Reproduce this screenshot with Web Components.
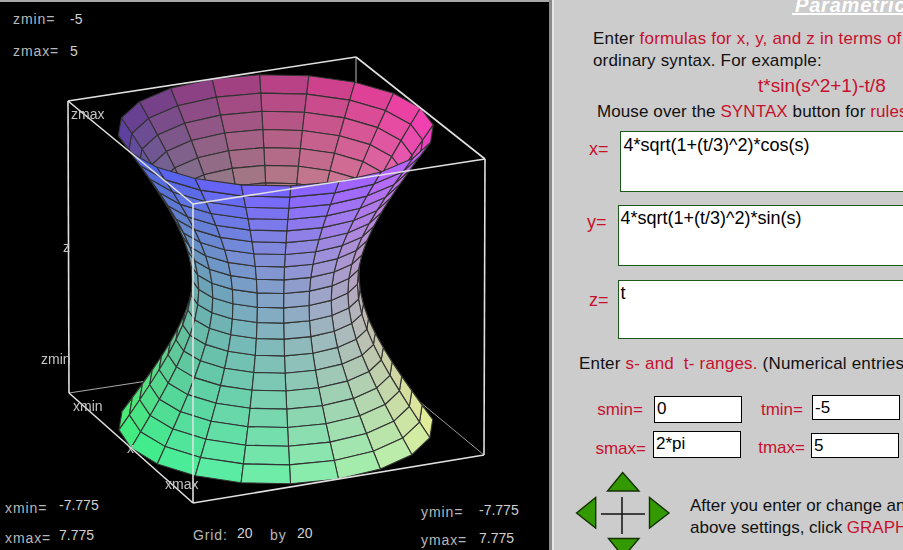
<!DOCTYPE html>
<html>
<head>
<meta charset="utf-8">
<title>Parametric Surfaces</title>
<style>
    html, body { margin: 0; height: 100%; overflow: hidden; background: #ccc; }
    body { display: flex; font-family: "Liberation Sans", Arial, sans-serif; }
</style>
</head>
<body>
<graph-view></graph-view>
<param-panel>
    <formula-box slot="x" label="x=" pad="36" top="7" style="height:61px;--text-top:3px;--text-left:3px">4*sqrt(1+(t/3)^2)*cos(s)</formula-box>
    <formula-box slot="y" label="y=" pad="34" top="6" style="height:61px">4*sqrt(1+(t/3)^2)*sin(s)</formula-box>
    <formula-box slot="z" label="z=" pad="36" top="9" gap="9" style="height:59px">t</formula-box>
</param-panel>
<script>
// 8 corners of the plot box as they land on screen, keyed x y z, 0 = min, 1 = max
const BOX = {
    '000': [69, 393], '100': [193, 503], '010': [356, 349], '110': [484, 455],
    '001': [68, 101], '101': [193, 204], '011': [356, 57], '111': [485, 159]
};

function project(x, y, z) {
    const fx = (x + 7.775) / 15.55, fy = (y + 7.775) / 15.55, fz = (z + 5) / 10;
    const out = [0, 0];
    for (let i = 0; i < 8; i++) {
        const a = i & 1, b = (i >> 1) & 1, c = (i >> 2) & 1;
        const w = (a ? fx : 1 - fx) * (b ? fy : 1 - fy) * (c ? fz : 1 - fz);
        const p = BOX['' + a + b + c];
        out[0] += w * p[0];
        out[1] += w * p[1];
    }
    return out;
}

function depth(x, y, z) {
    return 0.856 * x / 15.55 - 0.372 * y / 15.55 + 0.358 * z / 10;
}

function surface(s, t) {
    // the small bulge makes up for the waist the old applet drew a bit wide
    const r = 4 * Math.sqrt(1 + (t / 3) * (t / 3)) * (1 + 0.03 * (1 - (t / 5) * (t / 5)));
    return [r * Math.cos(s), r * Math.sin(s), t];
}

function faceColor(x, y, z, outer) {
    const nx = x / 7.775, ny = y / 7.775, nz = z / 5;
    let c;
    if (outer) {
        c = [150 + 80 * ny - 8 * nz * ny, 168 - 72 * nz, 177 + 40 * nx + 45 * nz];
    } else {
        c = [165 + 15 * nx + 75 * ny, 165 - 105 * nz, 155 + 45 * nx - 5 * ny + 20 * nz];
    }
    return 'rgb(' + c.map(v => Math.round(Math.max(0, Math.min(255, v)))).join(',') + ')';
}

class GraphView extends HTMLElement {
    constructor() {
        super();
        this.attachShadow({ mode: 'open' });
    }

    connectedCallback() {
        const line = (a, b, color, w) => {
            const p = project(a[0], a[1], a[2]), q = project(b[0], b[1], b[2]);
            return `<line x1="${p[0]}" y1="${p[1]}" x2="${q[0]}" y2="${q[1]}" stroke="${color}" stroke-width="${w}"/>`;
        };
        const M = 7.775, Z = 5;
        const A = [-M, -M, Z], B = [-M, M, Z], C = [M, M, Z], D = [M, -M, Z];
        const A2 = [-M, -M, -Z], B2 = [-M, M, -Z], C2 = [M, M, -Z], D2 = [M, -M, -Z];

        const back = line(B, B2, '#bbb', 1) + line(A2, B2, '#aaa', 1) + line(B2, C2, '#999', 1);
        const front = [[A, B], [B, C], [C, D], [D, A], [A, A2], [C, C2], [D, D2], [A2, D2], [D2, C2]]
            .map(e => line(e[0], e[1], '#e0e0e0', 1.6)).join('');

        const N = 20;
        const faces = [];
        for (let i = 0; i < N; i++) {
            for (let j = 0; j < N; j++) {
                const s0 = 2 * Math.PI * i / N, s1 = 2 * Math.PI * (i + 1) / N;
                const t0 = -5 + 10 * j / N, t1 = -5 + 10 * (j + 1) / N;
                const pts = [surface(s0, t0), surface(s1, t0), surface(s1, t1), surface(s0, t1)];
                const scr = pts.map(p => project(p[0], p[1], p[2]));
                let area = 0;
                for (let k = 0; k < 4; k++) {
                    const a = scr[k], b = scr[(k + 1) % 4];
                    area += a[0] * b[1] - b[0] * a[1];
                }
                const mid = surface((s0 + s1) / 2, (t0 + t1) / 2);
                faces.push({
                    d: depth(mid[0], mid[1], mid[2]),
                    pts: scr.map(p => p[0].toFixed(1) + ',' + p[1].toFixed(1)).join(' '),
                    fill: faceColor(mid[0], mid[1], mid[2], area < 0)
                });
            }
        }
        faces.sort((a, b) => a.d - b.d);
        const mesh = faces.map(f =>
            `<polygon points="${f.pts}" fill="${f.fill}" stroke="#333" stroke-width="1.1" stroke-linejoin="round"/>`).join('');

        this.shadowRoot.innerHTML = `
            <style>
                :host {
                    display: block;
                    position: relative;
                    flex: none;
                    width: 549px;
                    height: 550px;
                    box-sizing: border-box;
                    background: #000;
                    border-top: 2px solid #a8a8a8;
                    color: #d0d0d0;
                    font-size: 14px;
                    overflow: hidden;
                }
                svg {
                    position: absolute;
                    left: 0;
                    top: -2px;
                    width: 549px;
                    height: 550px;
                    filter: blur(0.3px);
                }
                svg text {
                    fill: #c4c4c4;
                    font-size: 14px;
                }
                .hud {
                    position: relative;
                    height: 548px;
                    display: flex;
                    flex-direction: column;
                    justify-content: space-between;
                }
                .top {
                    display: grid;
                    grid-template-columns: 57px auto;
                    row-gap: 16px;
                    padding: 9px 0 0 13px;
                    line-height: 16px;
                }
                .bottom {
                    display: grid;
                    grid-template-columns: 188px 228px auto;
                    align-items: end;
                    padding-left: 5px;
                    line-height: 16px;
                }
                .range {
                    display: grid;
                    grid-template-columns: 54px auto;
                    align-items: start;
                    row-gap: 11px;
                    margin-bottom: 4px;
                }
                .range .lab { padding-top: 3px; }
                .range.y {
                    grid-template-columns: 58px auto;
                    row-gap: 10px;
                    margin-bottom: 2px;
                }
                .range.y .lab { padding-top: 2px; }
                .grid {
                    display: flex;
                    align-items: flex-start;
                    margin-bottom: 7px;
                }
                .grid .lab { padding-top: 2px; }
                .lab { color: #b8b8b8; letter-spacing: 0.9px; }
            </style>
            <svg viewBox="0 0 549 550" xmlns="http://www.w3.org/2000/svg">
                ${back}
                ${mesh}
                ${front}
                <text x="71" y="119">zmax</text>
                <text x="63" y="252">z</text>
                <text x="41" y="364">zmin</text>
                <text x="73" y="411">xmin</text>
                <text x="127" y="453">x</text>
                <text x="165" y="489">xmax</text>
            </svg>
            <div class="hud">
                <div class="top">
                    <span class="lab">zmin=</span><span>-5</span>
                    <span class="lab">zmax=</span><span>5</span>
                </div>
                <div class="bottom">
                    <div class="range">
                        <span class="lab">xmin=</span><span>-7.775</span>
                        <span class="lab">xmax=</span><span>7.775</span>
                    </div>
                    <div class="grid">
                        <span class="lab" style="width:44px">Grid:</span><span style="width:33px">20</span>
                        <span class="lab" style="width:27px">by</span><span>20</span>
                    </div>
                    <div class="range y">
                        <span class="lab">ymin=</span><span>-7.775</span>
                        <span class="lab">ymax=</span><span>7.775</span>
                    </div>
                </div>
            </div>
        `;
    }
}

class FormulaBox extends HTMLElement {
    constructor() {
        super();
        this.attachShadow({ mode: 'open' });
    }

    connectedCallback() {
        const pad = this.getAttribute('pad') || 34;
        const top = this.getAttribute('top') || 6;
        const gap = this.getAttribute('gap') || 11;
        this.shadowRoot.innerHTML = `
            <style>
                :host {
                    display: flex;
                    align-items: stretch;
                }
                .label {
                    flex: none;
                    box-sizing: border-box;
                    padding: ${top}px ${gap}px 0 ${pad}px;
                    color: #c8102e;
                    font-size: 18px;
                    line-height: 22px;
                }
                .box {
                    flex: none;
                    width: 400px;
                    box-sizing: border-box;
                    border: 1px solid #1c5a1c;
                    background: #fff;
                    padding: var(--text-top, 2px) 2px 2px var(--text-left, 2px);
                    color: #000;
                    font-size: 18px;
                    line-height: 20px;
                }
            </style>
            <span class="label">${this.getAttribute('label')}</span>
            <div class="box"><slot></slot></div>
        `;
    }
}

class RangeField extends HTMLElement {
    constructor() {
        super();
        this.attachShadow({ mode: 'open' });
    }

    connectedCallback() {
        const gap = this.getAttribute('gap') || 6;
        const drop = this.getAttribute('drop') || 2;
        this.shadowRoot.innerHTML = `
            <style>
                :host {
                    display: flex;
                    justify-content: flex-end;
                    font-size: 17px;
                }
                .label {
                    color: #c8102e;
                    margin: ${drop}px ${gap}px 0 0;
                    line-height: 22px;
                }
                .box {
                    flex: none;
                    width: 88px;
                    box-sizing: border-box;
                    border: 1px solid #000;
                    background: #fff;
                    padding: 0 2px;
                    color: #000;
                    line-height: 23px;
                }
            </style>
            <span class="label">${this.getAttribute('label')}</span>
            <div class="box"><slot></slot></div>
        `;
    }
}

class ArrowPad extends HTMLElement {
    constructor() {
        super();
        this.attachShadow({ mode: 'open' });
    }

    connectedCallback() {
        this.shadowRoot.innerHTML = `
            <style>
                :host { display: block; flex: none; width: 96px; height: 85px; }
                svg { display: block; }
                polygon { fill: #339900; stroke: #143000; stroke-width: 1.4; }
                line { stroke: #111; stroke-width: 1.5; }
            </style>
            <svg width="96" height="85" viewBox="0 0 96 85">
                <polygon points="47.7,1.5 32.5,20 64,20"/>
                <polygon points="1.5,42 20.7,26.5 20.7,57"/>
                <polygon points="94,42 74.5,26.5 74.5,57"/>
                <polygon points="33.5,67.5 64,67.5 48.5,86"/>
                <line x1="26" y1="43" x2="70" y2="43"/>
                <line x1="47" y1="26" x2="47" y2="63"/>
            </svg>
        `;
    }
}

class ParamPanel extends HTMLElement {
    constructor() {
        super();
        this.attachShadow({ mode: 'open' });
    }

    connectedCallback() {
        this.shadowRoot.innerHTML = `
            <style>
                :host {
                    display: block;
                    flex: 1;
                    min-width: 0;
                    height: 550px;
                    overflow: hidden;
                    box-sizing: border-box;
                    background: #ccc;
                    border-left: 3px solid #8a8a8a;
                    padding-left: 1px;
                    box-shadow: inset 2px 0 #e6e6e6;
                    color: #111;
                    font-size: 17px;
                    white-space: nowrap;
                }
                .r { color: #c8102e; }
                .title {
                    height: 13px;
                    margin-left: 239px;
                    padding-left: 3px;
                    border-bottom: 2px solid #fff;
                    color: #fff;
                    font-size: 20px;
                    font-weight: bold;
                    font-style: italic;
                    line-height: 11px;
                    letter-spacing: 0.8px;
                    overflow: hidden;
                }
                .para { line-height: 22px; }
                .intro { margin: 13px 0 0 40px; }
                .tight { letter-spacing: 0.2px; }
                .wide { letter-spacing: 0.17px; }
                .example {
                    margin: 3px 0 0 205px;
                    color: #c8102e;
                    font-size: 19px;
                    line-height: 22px;
                }
                .mouse { margin: 4px 0 0 44px; letter-spacing: 0.1px; }
                .forms {
                    display: flex;
                    flex-direction: column;
                    margin-top: 8px;
                }
                ::slotted([slot="y"]) { margin-top: 13px; }
                ::slotted([slot="z"]) { margin-top: 14px; }
                .ranges-head { margin: 14px 0 0 26px; letter-spacing: 0.2px; }
                .ranges {
                    display: grid;
                    grid-template-columns: 189px 158px;
                    grid-template-rows: 28px 27px;
                    row-gap: 8px;
                    width: 347px;
                    margin-top: 20px;
                }
                .foot {
                    display: flex;
                    align-items: flex-start;
                    margin: 13px 0 0 22px;
                    gap: 19px;
                }
                .foot .para { margin-top: 24px; }
            </style>
            <div class="title">Parametric</div>
            <div class="para intro"><div class="tight">Enter <span class="r">formulas for x, y, and z in terms of</span></div><div class="wide">ordinary syntax. For example:</div></div>
            <div class="example">t*sin(s^2+1)-t/8</div>
            <div class="para mouse">Mouse over the <span class="r">SYNTAX</span> button for <span class="r">rules</span></div>
            <div class="forms">
                <slot name="x"></slot>
                <slot name="y"></slot>
                <slot name="z"></slot>
            </div>
            <div class="para ranges-head">Enter <span class="r">s- and&nbsp; t- ranges.</span> (Numerical entries</div>
            <div class="ranges">
                <range-field label="smin=" gap="11" drop="3" style="margin-top:1px">0</range-field>
                <range-field label="tmin=" gap="9" drop="4" style="margin-bottom:3px">-5</range-field>
                <range-field label="smax=" gap="7" drop="7" style="margin-right:1px">2*pi</range-field>
                <range-field label="tmax=" drop="4" style="margin:2px 1px 0 0">5</range-field>
            </div>
            <div class="foot">
                <arrow-pad></arrow-pad>
                <div class="para">After you enter or change an<br>above settings, click <span class="r">GRAPH</span></div>
            </div>
        `;
    }
}

customElements.define('graph-view', GraphView);
customElements.define('formula-box', FormulaBox);
customElements.define('range-field', RangeField);
customElements.define('arrow-pad', ArrowPad);
customElements.define('param-panel', ParamPanel);
</script>
</body>
</html>
